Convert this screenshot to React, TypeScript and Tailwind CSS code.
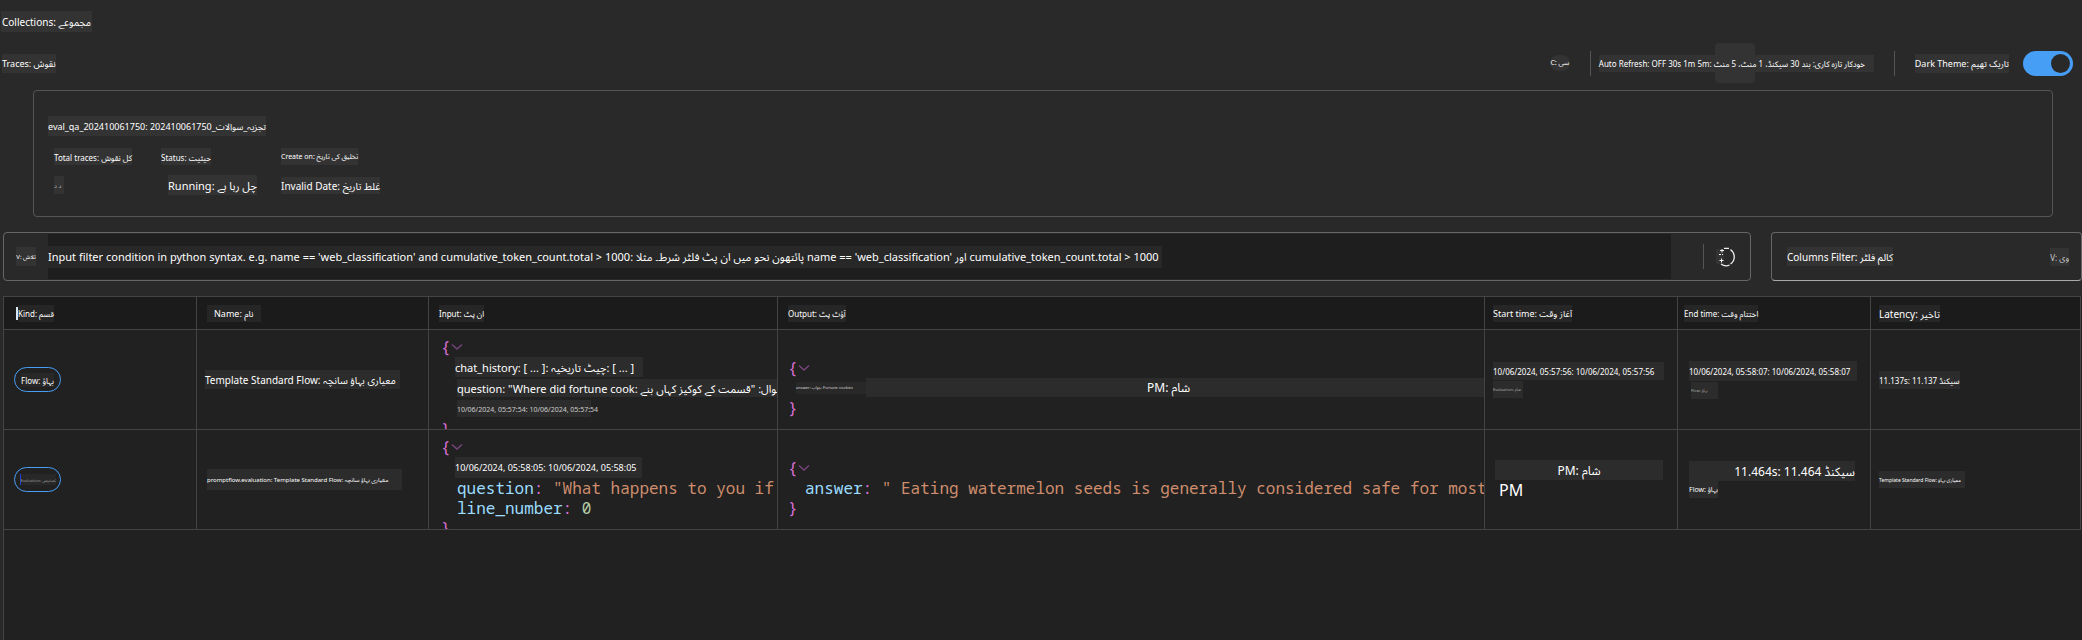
import { useState } from "react";
import type { ReactNode } from "react";

type ChipProps = { children: ReactNode; className?: string };

function Chip({ children, className = "" }: ChipProps) {
  return (
    <span className={`flex shrink-0 items-center whitespace-nowrap pt-0.5 ${className}`}>
      {children}
    </span>
  );
}

function Chevron() {
  return (
    <button type="button" aria-label="Collapse" className="inline-flex h-5 w-3 items-center">
      <svg viewBox="0 0 12 8" className="h-2 w-3" fill="none" stroke="#75457a" strokeWidth="1.5">
        <path d="M1 1.5 6 6 11 1.5" />
      </svg>
    </button>
  );
}

function Open() {
  return (
    <div className="flex h-5 items-center text-[#da70d6]">
      {"{"}
      <Chevron />
    </div>
  );
}

function Close() {
  return <div className="h-5 text-[#da70d6]">{"}"}</div>;
}

const cell = "h-[100px] border border-[#444] p-0 align-middle";
const head = "h-[33px] border border-[#444] bg-[#1b1b1b] p-0 text-left font-normal align-middle";
const mono = "font-['Noto_Sans_Mono','Liberation_Mono',monospace] text-base leading-5 whitespace-pre";
const sans = "font-['Noto_Sans','Noto_Sans_Arabic','DejaVu_Sans',sans-serif]";

export default function App() {
  const [dark, setDark] = useState(true);
  const [filter, setFilter] = useState(
    "Input filter condition in python syntax. e.g. name == 'web_classification' and cumulative_token_count.total > 1000: پائتھون نحو میں ان پٹ فلٹر شرط۔ مثلا name == 'web_classification' اور cumulative_token_count.total > 1000",
  );

  return (
    <main className={`flex min-h-screen flex-col overflow-hidden bg-[#292929] text-white ${sans}`}>
      <h1 className="flex pt-[11px] pl-px">
        <Chip className="h-[21px] bg-[#333] px-px text-[10px]">Collections: مجموعے</Chip>
      </h1>

      <header className="mt-[11px] flex h-10 items-center justify-between pr-[9px] pl-0.5">
        <h2>
          <Chip className="h-[19px] bg-[#333] text-[9px]">Traces: نقوش</Chip>
        </h2>
        <div className="flex items-center">
          <button type="button" className="mr-5 flex h-4 w-5 items-center justify-center rounded-full bg-[#333] text-[7px] whitespace-nowrap">
            C: سی
          </button>
          <div className="h-[25px] w-px bg-[#555]" />
          <div className="relative mx-2 flex h-10 items-center">
            <span className="absolute left-[116px] h-10 w-10 rounded bg-[#333]" />
            <Chip className="relative h-[17px] w-[275px] bg-[#333] text-[8px]">
              Auto Refresh: OFF 30s 1m 5m: خودکار تازہ کاری: بند 30 سیکنڈ، 1 منٹ، 5 منٹ
            </Chip>
          </div>
          <div className="ml-3 h-[25px] w-px bg-[#555]" />
          <label className="ml-5 flex items-center gap-3.5">
            <Chip className="h-[19px] bg-[#333] text-[9px]">Dark Theme: تاریک تھیم</Chip>
            <input
              type="checkbox"
              role="switch"
              checked={dark}
              onChange={(e) => setDark(e.target.checked)}
              className="flex h-[25px] w-[50px] appearance-none items-center rounded-full bg-[#666] px-[3px] before:h-[19px] before:w-[19px] before:rounded-full before:bg-[#292929] checked:justify-end checked:bg-[#479ef5]"
            />
          </label>
        </div>
      </header>

      <section className="mt-[7px] mr-[29px] ml-[33px] h-[127px] rounded border border-[#555] pt-[25px] pl-3.5">
        <h3 className="flex">
          <Chip className="h-5 bg-[#333] text-[9px]">eval_qa_202410061750: 202410061750_تجزیہ_سوالات</Chip>
        </h3>
        <dl className="mt-3 grid grid-cols-[107px_120px_auto] pl-1.5">
          <div>
            <dt className="flex"><Chip className="h-[17px] bg-[#333] text-[8px]">Total traces: کل نقوش</Chip></dt>
            <dd className="mt-[11px] flex"><Chip className="h-[18px] w-2.5 bg-[#333] text-[6px] text-[#bbb]">د د</Chip></dd>
          </div>
          <div>
            <dt className="flex"><Chip className="h-[17px] bg-[#333] text-[8px]">Status: حیثیت</Chip></dt>
            <dd className="mt-2.5 flex pl-[7px]"><Chip className="h-5 bg-[#333] text-[11px]">Running: چل رہا ہے</Chip></dd>
          </div>
          <div>
            <dt className="flex"><Chip className="h-[17px] bg-[#333] text-[7px]">Create on: تخلیق کی تاریخ</Chip></dt>
            <dd className="mt-3 flex"><Chip className="h-[17px] bg-[#333] text-[10px]">Invalid Date: غلط تاریخ</Chip></dd>
          </div>
        </dl>
      </section>

      <div className="mt-[15px] flex h-[49px] gap-5 pl-[3px]">
        <div className="flex min-w-0 flex-1 items-center rounded border border-[#666]">
          <Chip className="ml-3 h-[19px] w-5 justify-center bg-[#333] text-[6px]">V: تلاش</Chip>
          <div className="ml-3 flex h-[45px] min-w-0 flex-1 items-center bg-[#1e1e1e]">
            <input
              aria-label="Filter condition"
              value={filter}
              onChange={(e) => setFilter(e.target.value)}
              className="h-[22px] w-[1114px] bg-[#282828] pt-0.5 text-[11px] outline-none"
            />
          </div>
          <div className="ml-8 h-[25px] w-px bg-[#555]" />
          <button type="button" aria-label="Reload" className="mr-3.5 ml-3 flex h-5 w-5 items-center">
            <svg viewBox="0 0 20 20" className="h-5 w-5" fill="none" stroke="#eee" strokeWidth="1.3">
              <rect x="0" y="2" width="8" height="15" fill="#333" stroke="none" />
              <path d="M8 1.300h5M14.500 2.500c5 4 5 11 0 14.500M5 17c3 2.300 6 2.300 8.500 1" />
              <path d="M6 2v3.500M4 3.500h4M3 7.500h2M6 7.500h1M5.500 11.500v4M3.500 13.500h4" strokeWidth="1" />
            </svg>
          </button>
        </div>
        <button type="button" className="flex w-[311px] items-center justify-between rounded border border-[#666] border-b-[#aaa] pr-3 pl-[15px]">
          <Chip className="h-[19px] bg-[#333] text-[10px]">Columns Filter: کالم فلٹر</Chip>
          <Chip className="h-[18px] bg-[#333] text-[8px] text-[#ccc]">V: وی</Chip>
        </button>
      </div>

      <div className="mt-[15px] ml-[3px] flex-1 border-l border-[#444] bg-[#212121]">
        <table className="-ml-px w-full table-fixed border-collapse">
          <colgroup>
            <col className="w-[193px]" />
            <col className="w-[232px]" />
            <col className="w-[349px]" />
            <col className="w-[707px]" />
            <col className="w-[193px]" />
            <col className="w-[193px]" />
            <col />
          </colgroup>
          <thead>
            <tr>
              <th className={head}>
                <div className="flex pl-3">
                  <span className="h-[13px] w-0.5 self-center bg-[#d8e8f4]" />
                  <Chip className="h-[17px] bg-[#262626] text-[8px]">Kind: قسم</Chip>
                </div>
              </th>
              <th className={head}><div className="flex pl-2.5"><Chip className="h-[17px] bg-[#262626] px-[7px] text-[9px]">Name: نام</Chip></div></th>
              <th className={head}><div className="flex pl-2.5"><Chip className="h-[17px] bg-[#262626] text-[8px]">Input: ان پٹ</Chip></div></th>
              <th className={head}><div className="flex pl-2.5"><Chip className="h-[17px] bg-[#262626] text-[8px]">Output: آؤٹ پٹ</Chip></div></th>
              <th className={head}><div className="flex pl-2"><Chip className="h-[17px] bg-[#262626] text-[9px]">Start time: آغاز وقت</Chip></div></th>
              <th className={head}><div className="flex pl-1.5"><Chip className="h-[17px] bg-[#262626] text-[8px]">End time: اختتام وقت</Chip></div></th>
              <th className={head}><div className="flex pl-2"><Chip className="h-[17px] bg-[#262626] text-[10px]">Latency: تاخیر</Chip></div></th>
            </tr>
          </thead>
          <tbody>
            <tr>
              <td className={cell}>
                <div className="ml-2.5 flex h-[25px] w-[47px] items-center justify-center rounded-full border border-[#479ef5]">
                  <Chip className="h-3.5 bg-[#282828] text-[8px]">Flow: بہاؤ</Chip>
                </div>
              </td>
              <td className={cell}><div className="flex pl-2"><Chip className="h-[19px] w-[195px] bg-[#2c2c2c] text-[10px]">Template Standard Flow: معیاری بہاؤ سانچہ</Chip></div></td>
              <td className={cell}>
                <div className={`${mono} h-[98px] overflow-hidden pt-1.5 pl-3`}>
                  <Open />
                  <div className={`flex h-[21px] items-center pl-3.5 text-[11px] ${sans}`}><Chip className="h-5 w-[188px] bg-[#2c2c2c]">chat_history: [ ... ]: چیٹ تاریخیہ: [ ... ]</Chip></div>
                  <div className={`flex h-[21px] items-center pl-4 text-[11px] ${sans}`}><Chip className="h-[18px] w-full bg-[#2c2c2c]">question: "Where did fortune cook: سوال: "قسمت کے کوکیز کہاں بنے</Chip></div>
                  <div className={`flex h-5 items-center pl-4 text-[7px] text-[#ccc] ${sans}`}><Chip className="h-[17px] w-[134px] bg-[#2c2c2c]">10/06/2024, 05:57:54: 10/06/2024, 05:57:54</Chip></div>
                  <Close />
                </div>
              </td>
              <td className={cell}>
                <div className={`${mono} overflow-hidden pt-4 pl-2.5`}>
                  <Open />
                  <div className={`flex h-5 items-center pl-2 text-xs ${sans}`}>
                    <span className="h-3 w-[70px] bg-[#282828] text-[4px] leading-3 text-[#ddd]">answer: جواب: Fortune cookies</span>
                    <span className="flex h-[19px] flex-1 items-center bg-[#2c2c2c] pl-[281px]">PM: شام</span>
                  </div>
                  <Close />
                </div>
              </td>
              <td className={cell}>
                <div className="flex flex-col items-start gap-px pl-2">
                  <Chip className="h-[18px] w-[171px] bg-[#2c2c2c] text-[8px]">10/06/2024, 05:57:56: 10/06/2024, 05:57:56</Chip>
                  <Chip className="h-[17px] w-[30px] bg-[#2c2c2c] text-[4px] text-[#aaa]">Evaluation: شام</Chip>
                </div>
              </td>
              <td className={cell}>
                <div className="flex flex-col items-start gap-px pl-[11px]">
                  <Chip className="h-5 w-[168px] bg-[#2c2c2c] text-[8px]">10/06/2024, 05:58:07: 10/06/2024, 05:58:07</Chip>
                  <Chip className="ml-0.5 h-[17px] w-[27px] bg-[#2c2c2c] text-[4px] text-[#aaa]">Flow: بہاؤ</Chip>
                </div>
              </td>
              <td className={cell}><div className="flex pl-2"><Chip className="h-[18px] bg-[#2c2c2c] text-[8px]">11.137s: 11.137 سیکنڈ</Chip></div></td>
            </tr>
            <tr>
              <td className={cell}>
                <div className="ml-2.5 flex h-[25px] w-[47px] items-center justify-center rounded-full border border-[#479ef5]">
                  <Chip className="h-[11px] w-9 border-l border-[#2440d0] bg-[#282828] text-[4px] text-[#999]">Evaluation: تشخیص</Chip>
                </div>
              </td>
              <td className={cell}><div className="flex pl-2.5"><Chip className="h-[21px] w-[195px] bg-[#2c2c2c] text-[6px]">promptflow.evaluation: Template Standard Flow: معیاری بہاؤ سانچہ</Chip></div></td>
              <td className={cell}>
                <div className={`${mono} h-[98px] overflow-hidden pt-1.5 pl-3`}>
                  <Open />
                  <div className={`flex h-[21px] items-center pl-3.5 text-[9px] ${sans}`}><Chip className="h-[21px] w-[187px] bg-[#2c2c2c]">10/06/2024, 05:58:05: 10/06/2024, 05:58:05</Chip></div>
                  <div className="h-5 pl-4 text-[#ce8d6d]"><span className="text-[#9cdcfe]">question</span><span className="text-[#da70d6]">:</span> "What happens to you if</div>
                  <div className="h-5 pl-4 text-[#b5cea8]"><span className="text-[#9cdcfe]">line_number</span><span className="text-[#da70d6]">:</span> 0</div>
                  <Close />
                </div>
              </td>
              <td className={cell}>
                <div className={`${mono} overflow-hidden pt-4 pl-2.5`}>
                  <Open />
                  <div className="h-5 pl-[17px] text-[#ce8d6d]"><span className="text-[#9cdcfe]">answer</span><span className="text-[#da70d6]">:</span> " Eating watermelon seeds is generally considered safe for most</div>
                  <Close />
                </div>
              </td>
              <td className={cell}>
                <div className="flex flex-col items-start pl-2.5">
                  <Chip className="h-5 w-[168px] justify-center bg-[#2c2c2c] text-xs">PM: شام</Chip>
                  <span className="pl-1 text-base leading-5">PM</span>
                </div>
              </td>
              <td className={cell}>
                <div className="flex flex-col items-start pl-[11px]">
                  <Chip className="h-5 w-[166px] justify-end bg-[#2c2c2c] text-xs">11.464s: 11.464 سیکنڈ</Chip>
                  <Chip className="h-[17px] bg-[#2c2c2c] text-[7px]">Flow: بہاؤ</Chip>
                </div>
              </td>
              <td className={cell}><div className="flex pl-2"><Chip className="h-[17px] w-[86px] bg-[#2c2c2c] text-[5px]">Template Standard Flow: معیاری بہاؤ</Chip></div></td>
            </tr>
          </tbody>
        </table>
      </div>
    </main>
  );
}
